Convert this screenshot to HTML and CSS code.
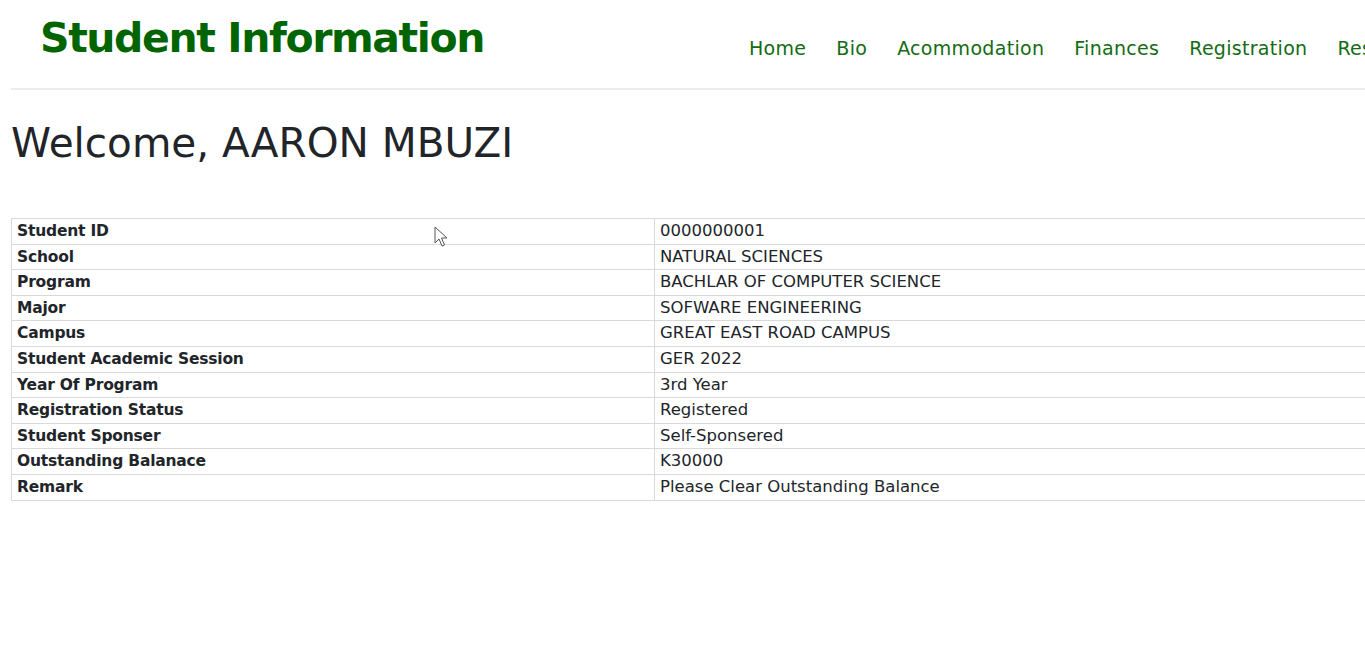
FILE: index.html
```html
<!DOCTYPE html>
<html lang="en">
<head>
<meta charset="utf-8">
<title>Student Information</title>
<link rel="stylesheet" href="styles.css">
</head>
<body>
<div class="page">
  <header class="site-header">
    <h2 class="brand">Student Information</h2>
    <nav class="nav">
      <a href="#">Home</a>
      <a href="#">Bio</a>
      <a href="#">Acommodation</a>
      <a href="#">Finances</a>
      <a href="#">Registration</a>
      <a href="#">Results</a>
    </nav>
  </header>

  <h1 class="welcome">Welcome, AARON MBUZI</h1>

  <table class="info">
    <colgroup><col class="col-label"><col></colgroup>
    <tbody>
      <tr><th>Student ID</th><td>0000000001</td></tr>
      <tr><th>School</th><td>NATURAL SCIENCES</td></tr>
      <tr><th>Program</th><td>BACHLAR OF COMPUTER SCIENCE</td></tr>
      <tr><th>Major</th><td>SOFWARE ENGINEERING</td></tr>
      <tr><th>Campus</th><td>GREAT EAST ROAD CAMPUS</td></tr>
      <tr><th>Student Academic Session</th><td>GER 2022</td></tr>
      <tr><th>Year Of Program</th><td>3rd Year</td></tr>
      <tr><th>Registration Status</th><td>Registered</td></tr>
      <tr><th>Student Sponser</th><td>Self-Sponsered</td></tr>
      <tr><th>Outstanding Balanace</th><td>K30000</td></tr>
      <tr><th>Remark</th><td>Please Clear Outstanding Balance</td></tr>
    </tbody>
  </table>
</div>
<svg class="cursor" width="14" height="22" viewBox="0 0 14 22" aria-hidden="true">
  <path d="M1 1 L1 17 L5 13 L8 20 L10.5 19 L7.5 12 L13 12 Z" fill="#fff" stroke="#555" stroke-width="1" stroke-linejoin="round"/>
</svg>
</body>
</html>
```
FILE: styles.css
```css
html, body {
  margin: 0;
  padding: 0;
  background: #ffffff;
  overflow-x: hidden;
}

body {
  font-family: "DejaVu Sans", "Liberation Sans", sans-serif;
  color: #212529;
  position: relative;
}

.page {
  width: 1560px;
  padding-left: 11px;
}

.site-header {
  display: flex;
  align-items: flex-start;
  padding-top: 14px;
  border-bottom: 2px solid #ececec;
  height: 74px;
}

.brand {
  margin: 0;
  width: 709px;
  padding-left: 29px;
  font-size: 41px;
  line-height: 48px;
  font-weight: 700;
  letter-spacing: -1.4px;
  color: #006400;
  white-space: nowrap;
}

.nav {
  display: flex;
  gap: 30px;
  margin-top: 22px;
}

.nav a {
  font-size: 19px;
  line-height: 24px;
  letter-spacing: 0.3px;
  color: #136b13;
  text-decoration: none;
  white-space: nowrap;
}

.welcome {
  margin: 29px 0 51px;
  font-size: 40.5px;
  line-height: 48px;
  font-weight: 400;
  color: #212529;
}

.info {
  border-collapse: collapse;
  table-layout: fixed;
  width: 1540px;
}

.col-label {
  width: 643px;
}

.info th,
.info td {
  border: 1px solid #d9d9d9;
  padding: 0 5px;
  height: 24.6px;
  line-height: 24.6px;
  text-align: left;
  vertical-align: middle;
  white-space: nowrap;
}

.info th {
  font-size: 15.5px;
  font-weight: 700;
  letter-spacing: -0.2px;
}

.info td {
  font-size: 16.5px;
  font-weight: 400;
}

.cursor {
  position: absolute;
  left: 434px;
  top: 226px;
}
```
